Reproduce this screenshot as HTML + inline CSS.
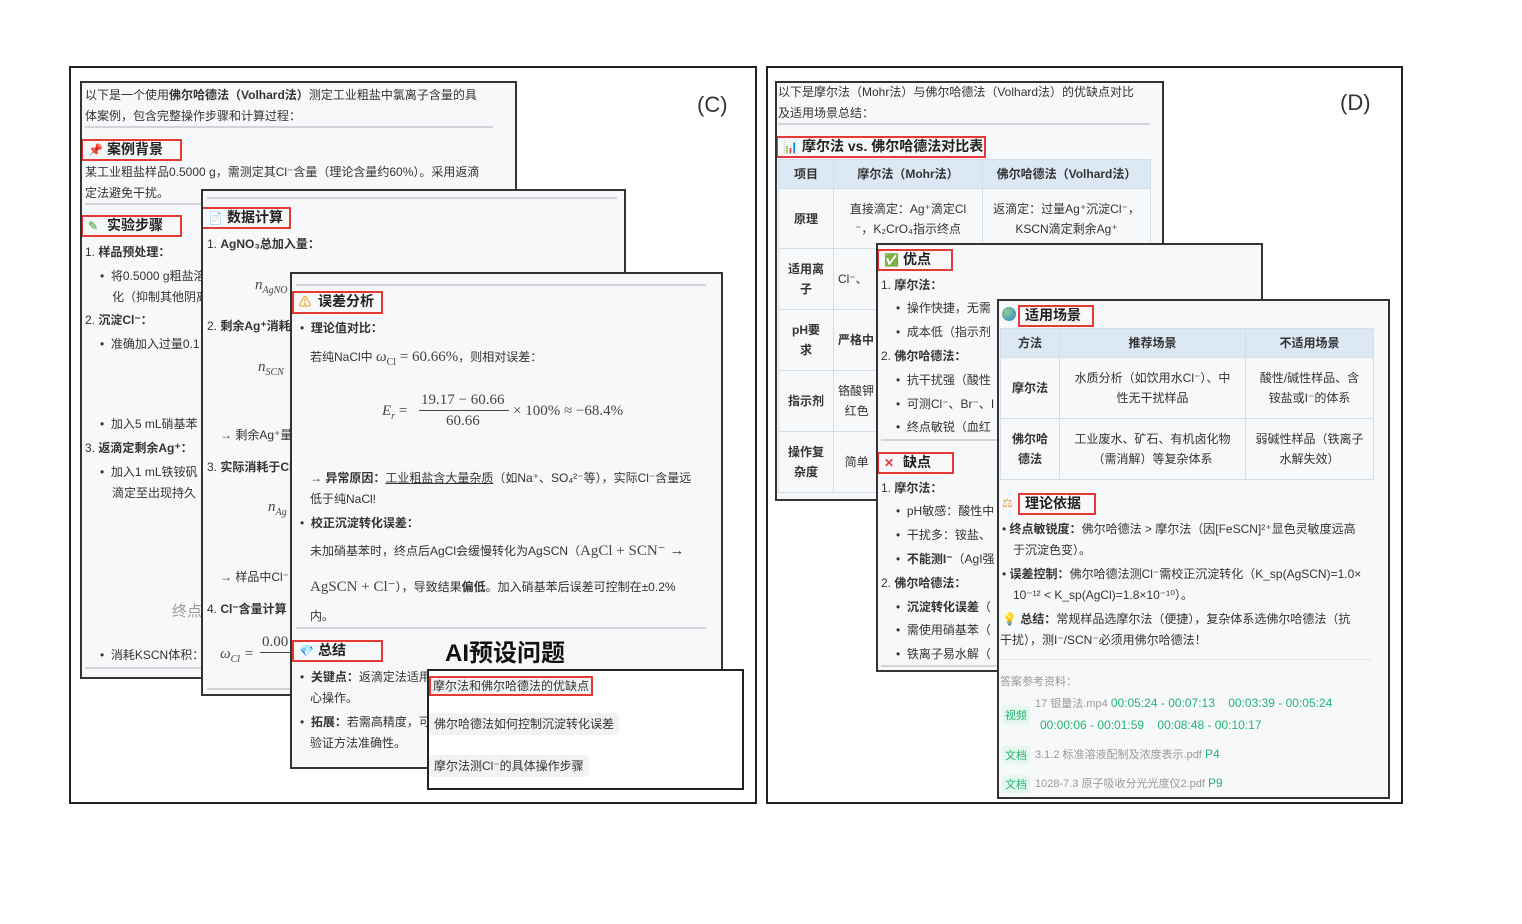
<!DOCTYPE html>
<html><head><meta charset="utf-8"><style>
body{margin:0;width:1522px;height:924px;background:#fff;position:relative;overflow:hidden;font-family:"Liberation Sans","Noto Sans CJK SC",sans-serif;color:#333;font-size:12px}
.p{position:absolute;border:2px solid #222;background:#fff;box-sizing:border-box}
.c{position:absolute;border:2px solid #333;background:#f7f8fa;box-sizing:border-box;overflow:hidden}
.in{position:absolute;width:1522px;height:924px}
.t{position:absolute;white-space:nowrap;line-height:16px;font-size:12px}
.b{font-weight:bold}
.hr{position:absolute;height:2px;background:#d0d3d8}
.rb{position:absolute;border:2px solid #e53935;box-sizing:border-box;font-weight:bold;font-size:14px;line-height:17px;padding-left:24px;white-space:nowrap;color:#222}
.ic{position:absolute;left:5px;top:1px;font-size:12px}
.m{font-family:"Liberation Serif",serif;font-size:15px;color:#444}
.g{color:#999}
.gr{color:#22b573}
.tag{position:absolute;background:#e6f7ee;color:#22b573;font-size:11px;padding:1px 3px}
.chip{position:absolute;background:#f1f2f4;border-radius:4px;font-size:12px;line-height:22px;padding:0 5px;white-space:nowrap}
table{position:absolute;border-collapse:collapse;font-size:12px}
td,th{border:1px solid #d6dde6;text-align:center;line-height:20px;padding:0 4px}
th{background:#dde8f5;font-weight:bold;height:28px}
td.h{font-weight:bold}
</style></head><body>

<div class="p" style="left:69px;top:66px;width:688px;height:738px"></div>
<div class="p" style="left:766px;top:66px;width:637px;height:738px"></div>
<div style="position:absolute;left:697px;top:92px;font-size:22px">(C)</div>
<div style="position:absolute;left:1340px;top:90px;font-size:22px">(D)</div>

<!-- C1 -->
<div class="c" style="left:80px;top:81px;width:437px;height:598px"><div class="in" style="left:-82px;top:-83px">
<div class="t" style="left:85px;top:87px">以下是一个使用<b>佛尔哈德法（Volhard法）</b>测定工业粗盐中氯离子含量的具</div>
<div class="t" style="left:85px;top:108px">体案例，包含完整操作步骤和计算过程：</div>
<div class="hr" style="left:85px;top:126px;width:408px"></div>
<div class="rb" style="left:81px;top:139px;width:101px;height:22px"><span class="ic" style="color:#e53935">📌</span>案例背景</div>
<div class="t" style="left:85px;top:164px">某工业粗盐样品0.5000 g，需测定其Cl⁻含量（理论含量约60%）。采用返滴</div>
<div class="t" style="left:85px;top:185px">定法避免干扰。</div>
<div class="hr" style="left:85px;top:203px;width:408px"></div>
<div class="rb" style="left:81px;top:215px;width:101px;height:22px"><span class="ic" style="color:#7cc576">✎</span>实验步骤</div>
<div class="t" style="left:85px;top:244px">1. <b>样品预处理：</b></div>
<div class="t" style="left:100px;top:268px">•&nbsp;&nbsp;将0.5000 g粗盐溶解</div>
<div class="t" style="left:112px;top:289px">化（抑制其他阴离子</div>
<div class="t" style="left:85px;top:312px">2. <b>沉淀Cl⁻：</b></div>
<div class="t" style="left:100px;top:336px">•&nbsp;&nbsp;准确加入过量0.1</div>
<div class="t" style="left:100px;top:416px">•&nbsp;&nbsp;加入5 mL硝基苯</div>
<div class="t" style="left:85px;top:440px">3. <b>返滴定剩余Ag⁺：</b></div>
<div class="t" style="left:100px;top:464px">•&nbsp;&nbsp;加入1 mL铁铵矾</div>
<div class="t" style="left:112px;top:485px">滴定至出现持久</div>
<div class="t g" style="left:172px;top:602px;font-size:15px;line-height:20px">终点</div>
<div class="t" style="left:100px;top:647px">•&nbsp;&nbsp;消耗KSCN体积：</div>
<div class="hr" style="left:85px;top:667px;width:408px"></div>
</div></div>

<!-- C2 -->
<div class="c" style="left:201px;top:189px;width:425px;height:507px"><div class="in" style="left:-203px;top:-191px">
<div class="hr" style="left:207px;top:197px;width:410px"></div>
<div class="rb" style="left:201px;top:207px;width:90px;height:22px"><span class="ic" style="color:#f08a5d">📄</span>数据计算</div>
<div class="t" style="left:207px;top:236px">1. <b>AgNO₃总加入量：</b></div>
<div class="t m" style="left:255px;top:277px;font-style:italic">n<sub style="font-size:10px">AgNO</sub></div>
<div class="t" style="left:207px;top:318px">2. <b>剩余Ag⁺消耗</b></div>
<div class="t m" style="left:258px;top:359px;font-style:italic">n<sub style="font-size:10px">SCN</sub></div>
<div class="t" style="left:220px;top:427px">→ 剩余Ag⁺量</div>
<div class="t" style="left:207px;top:459px">3. <b>实际消耗于Cl</b></div>
<div class="t m" style="left:268px;top:499px;font-style:italic">n<sub style="font-size:10px">Ag</sub></div>
<div class="t" style="left:220px;top:569px">→ 样品中Cl⁻</div>
<div class="t" style="left:207px;top:601px">4. <b>Cl⁻含量计算</b></div>
<div class="t m" style="left:262px;top:634px">0.00</div>
<div style="position:absolute;left:260px;top:652px;width:40px;height:1px;background:#444"></div>
<div class="t m" style="left:220px;top:646px;font-style:italic">ω<sub style="font-size:10px">Cl</sub> =</div>
<div class="hr" style="left:207px;top:688px;width:410px"></div>
</div></div>

<!-- C3 -->
<div class="c" style="left:290px;top:272px;width:433px;height:497px"><div class="in" style="left:-292px;top:-274px">
<div class="hr" style="left:296px;top:284px;width:410px"></div>
<div class="rb" style="left:292px;top:291px;width:91px;height:23px"><span class="ic" style="color:#f5a623">⚠</span>误差分析</div>
<div class="t" style="left:300px;top:320px">•&nbsp;&nbsp;<b>理论值对比：</b></div>
<div class="t" style="left:310px;top:349px">若纯NaCl中 <span class="m"><i>ω</i><sub style="font-size:10px">Cl</sub> = 60.66%</span>，则相对误差：</div>
<div class="t m" style="left:382px;top:403px"><i>E<sub style="font-size:10px">r</sub></i> =</div>
<div class="t m" style="left:421px;top:392px">19.17 − 60.66</div>
<div style="position:absolute;left:419px;top:410px;width:90px;height:1px;background:#444"></div>
<div class="t m" style="left:446px;top:413px">60.66</div>
<div class="t m" style="left:513px;top:403px">× 100% ≈ −68.4%</div>
<div class="t" style="left:310px;top:470px">→ <b>异常原因：</b><u>工业粗盐含大量杂质</u>（如Na⁺、SO₄²⁻等），实际Cl⁻含量远</div>
<div class="t" style="left:310px;top:491px">低于纯NaCl!</div>
<div class="t" style="left:300px;top:515px">•&nbsp;&nbsp;<b>校正沉淀转化误差：</b></div>
<div class="t" style="left:310px;top:543px">未加硝基苯时，终点后AgCl会缓慢转化为AgSCN（<span class="m">AgCl + SCN⁻ →</span></div>
<div class="t" style="left:310px;top:579px"><span class="m">AgSCN + Cl⁻</span>），导致结果<b>偏低</b>。加入硝基苯后误差可控制在±0.2%</div>
<div class="t" style="left:310px;top:608px">内。</div>
<div class="hr" style="left:296px;top:627px;width:410px"></div>
<div class="rb" style="left:292px;top:640px;width:91px;height:22px"><span class="ic" style="color:#3b9ce8">💎</span>总结</div>
<div class="t" style="left:300px;top:669px">•&nbsp;&nbsp;<b>关键点：</b>返滴定法适用于</div>
<div class="t" style="left:310px;top:690px">心操作。</div>
<div class="t" style="left:300px;top:714px">•&nbsp;&nbsp;<b>拓展：</b>若需高精度，可</div>
<div class="t" style="left:310px;top:735px">验证方法准确性。</div>
</div></div>

<div style="position:absolute;left:445px;top:638px;font-size:24px;font-weight:bold;color:#111;line-height:32px">AI预设问题</div>
<div class="p" style="left:427px;top:669px;width:317px;height:121px;border-color:#222">
<div style="position:absolute;left:0;top:5px;border:2px solid #e53935;font-size:12px;line-height:16px;padding:0 2px;white-space:nowrap;background:#f1f2f4">摩尔法和佛尔哈德法的优缺点</div>
<div class="chip" style="left:0;top:42px">佛尔哈德法如何控制沉淀转化误差</div>
<div class="chip" style="left:0;top:84px">摩尔法测Cl⁻的具体操作步骤</div>
</div>

<!-- D1 -->
<div class="c" style="left:775px;top:81px;width:389px;height:420px"><div class="in" style="left:-777px;top:-83px">
<div class="t" style="left:778px;top:84px">以下是摩尔法（Mohr法）与佛尔哈德法（Volhard法）的优缺点对比</div>
<div class="t" style="left:778px;top:105px">及适用场景总结：</div>
<div class="hr" style="left:778px;top:123px;width:372px"></div>
<div class="rb" style="left:776px;top:136px;width:210px;height:22px"><span class="ic" style="color:#4a90d9">📊</span>摩尔法 vs. 佛尔哈德法对比表</div>
<table style="left:778px;top:159px;width:373px">
<tr><th style="width:46px">项目</th><th style="width:140px">摩尔法（Mohr法）</th><th>佛尔哈德法（Volhard法）</th></tr>
<tr style="height:60px"><td class="h">原理</td><td>直接滴定：Ag⁺滴定Cl<br>⁻，K₂CrO₄指示终点</td><td>返滴定：过量Ag⁺沉淀Cl⁻，<br>KSCN滴定剩余Ag⁺</td></tr>
<tr style="height:61px"><td class="h">适用离<br>子</td><td style="text-align:left">Cl⁻、</td><td></td></tr>
<tr style="height:61px"><td class="h">pH要<br>求</td><td style="text-align:left" class="h">严格中</td><td></td></tr>
<tr style="height:61px"><td class="h">指示剂</td><td style="text-align:left">铬酸钾<br>&nbsp;&nbsp;红色</td><td></td></tr>
<tr style="height:61px"><td class="h">操作复<br>杂度</td><td style="text-align:left">&nbsp;&nbsp;简单</td><td></td></tr>
</table>
</div></div>

<!-- D2 -->
<div class="c" style="left:876px;top:243px;width:387px;height:429px"><div class="in" style="left:-878px;top:-245px">
<div class="rb" style="left:877px;top:249px;width:76px;height:22px"><span class="ic" style="color:#4caf50">✅</span>优点</div>
<div class="t" style="left:881px;top:277px">1. <b>摩尔法：</b></div>
<div class="t" style="left:896px;top:300px">•&nbsp;&nbsp;操作快捷，无需</div>
<div class="t" style="left:896px;top:324px">•&nbsp;&nbsp;成本低（指示剂</div>
<div class="t" style="left:881px;top:348px">2. <b>佛尔哈德法：</b></div>
<div class="t" style="left:896px;top:372px">•&nbsp;&nbsp;抗干扰强（酸性</div>
<div class="t" style="left:896px;top:396px">•&nbsp;&nbsp;可测Cl⁻、Br⁻、I</div>
<div class="t" style="left:896px;top:419px">•&nbsp;&nbsp;终点敏锐（血红</div>
<div class="hr" style="left:881px;top:439px;width:370px"></div>
<div class="rb" style="left:877px;top:452px;width:77px;height:22px"><span class="ic" style="color:#e53935;font-weight:bold">✕</span>缺点</div>
<div class="t" style="left:881px;top:480px">1. <b>摩尔法：</b></div>
<div class="t" style="left:896px;top:503px">•&nbsp;&nbsp;pH敏感：酸性中</div>
<div class="t" style="left:896px;top:527px">•&nbsp;&nbsp;干扰多：铵盐、</div>
<div class="t" style="left:896px;top:551px">•&nbsp;&nbsp;<b>不能测I⁻</b>（AgI强</div>
<div class="t" style="left:881px;top:575px">2. <b>佛尔哈德法：</b></div>
<div class="t" style="left:896px;top:599px">•&nbsp;&nbsp;<b>沉淀转化误差</b>（</div>
<div class="t" style="left:896px;top:622px">•&nbsp;&nbsp;需使用硝基苯（</div>
<div class="t" style="left:896px;top:646px">•&nbsp;&nbsp;铁离子易水解（</div>
<div class="hr" style="left:881px;top:665px;width:370px"></div>
</div></div>

<!-- D3 -->
<div class="c" style="left:997px;top:299px;width:393px;height:500px"><div class="in" style="left:-999px;top:-301px">
<div style="position:absolute;left:1002px;top:307px;width:14px;height:14px;border-radius:50%;background:radial-gradient(circle at 35% 35%,#8fd18a,#2a7fd4)"></div>
<div class="rb" style="left:1018px;top:305px;width:76px;height:22px;padding-left:5px">适用场景</div>
<table style="left:1000px;top:328px;width:374px">
<tr><th style="width:50px">方法</th><th style="width:177px">推荐场景</th><th>不适用场景</th></tr>
<tr style="height:61px"><td class="h">摩尔法</td><td>水质分析（如饮用水Cl⁻）、中<br>性无干扰样品</td><td>酸性/碱性样品、含<br>铵盐或I⁻的体系</td></tr>
<tr style="height:61px"><td class="h">佛尔哈<br>德法</td><td>工业废水、矿石、有机卤化物<br>（需消解）等复杂体系</td><td>弱碱性样品（铁离子<br>水解失效）</td></tr>
</table>
<div class="t" style="left:1002px;top:495px;color:#e8a44a">⚖</div>
<div class="rb" style="left:1018px;top:493px;width:78px;height:22px;padding-left:5px">理论依据</div>
<div class="t" style="left:1002px;top:521px">•&nbsp;<b>终点敏锐度：</b>佛尔哈德法 &gt; 摩尔法（因[FeSCN]²⁺显色灵敏度远高</div>
<div class="t" style="left:1013px;top:542px">于沉淀色变）。</div>
<div class="t" style="left:1002px;top:566px">•&nbsp;<b>误差控制：</b>佛尔哈德法测Cl⁻需校正沉淀转化（K_sp(AgSCN)=1.0×</div>
<div class="t" style="left:1013px;top:587px">10⁻¹² &lt; K_sp(AgCl)=1.8×10⁻¹⁰）。</div>
<div class="t" style="left:1002px;top:611px"><span style="color:#f5c542">💡</span> <b>总结：</b>常规样品选摩尔法（便捷），复杂体系选佛尔哈德法（抗</div>
<div class="t" style="left:1000px;top:632px">干扰），测I⁻/SCN⁻必须用佛尔哈德法！</div>
<div class="hr" style="left:1000px;top:659px;width:372px;height:1px;background:#e3e5e8"></div>
<div class="t g" style="left:1000px;top:674px;font-size:11px">答案参考资料：</div>
<div class="tag" style="left:1002px;top:706px">视频</div>
<div class="t" style="left:1035px;top:695px;font-size:11px"><span class="g">17 银量法.mp4</span> <span class="gr" style="font-size:12px">00:05:24 - 00:07:13 &nbsp;&nbsp; 00:03:39 - 00:05:24</span></div>
<div class="t gr" style="left:1040px;top:717px">00:00:06 - 00:01:59 &nbsp;&nbsp; 00:08:48 - 00:10:17</div>
<div class="tag" style="left:1002px;top:746px">文档</div>
<div class="t" style="left:1035px;top:746px;font-size:11px"><span class="g">3.1.2 标准溶液配制及浓度表示.pdf</span> <span class="gr" style="font-size:12px">P4</span></div>
<div class="tag" style="left:1002px;top:775px">文档</div>
<div class="t" style="left:1035px;top:775px;font-size:11px"><span class="g">1028-7.3 原子吸收分光光度仪2.pdf</span> <span class="gr" style="font-size:12px">P9</span></div>
</div></div>

</body></html>
